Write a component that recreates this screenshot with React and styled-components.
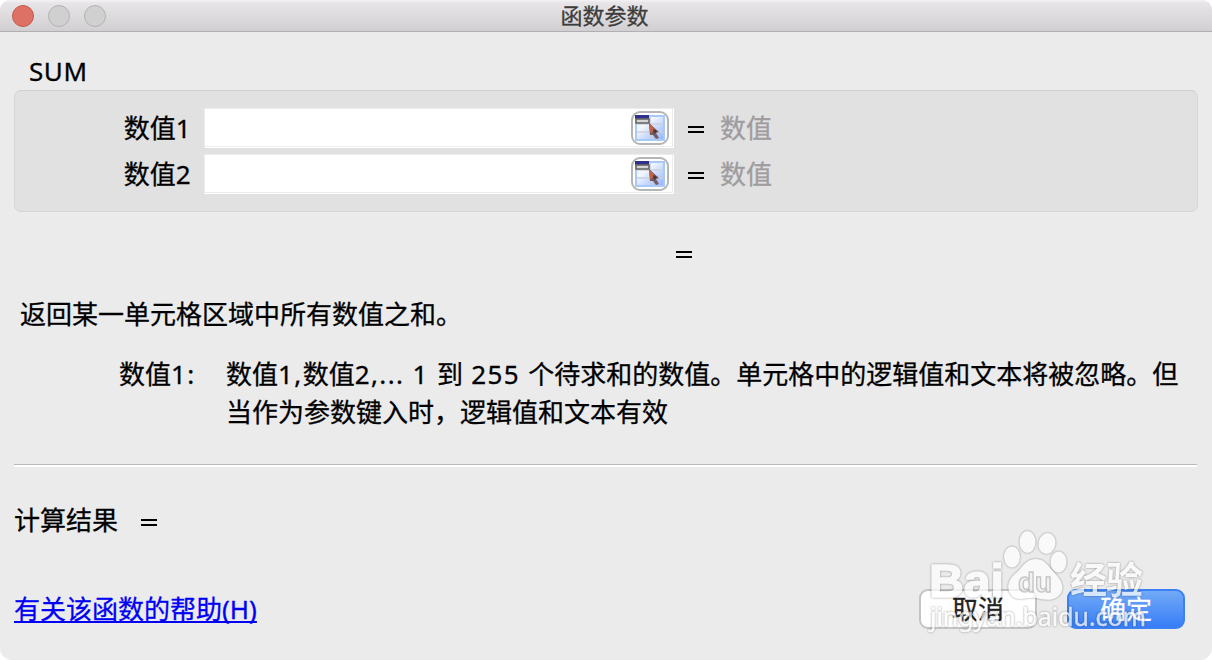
import React from 'react';
import styled, { createGlobalStyle, css } from 'styled-components';

const GlobalStyle = createGlobalStyle`
  * {
    box-sizing: border-box;
  }

  body {
    margin: 0;
    background: #fff;
  }
`;

const Dialog = styled.main`
  position: relative;
  display: flex;
  flex-direction: column;
  width: 1212px;
  height: 660px;
  overflow: hidden;
  border-radius: 10px 10px 12px 12px;
  background: #ebebeb;
  color: #000;
  font-family: 'Noto Sans', 'Noto Sans CJK SC', sans-serif;
  font-size: 26px;
  line-height: 38px;
  white-space: nowrap;
  -webkit-text-stroke: 0.3px currentColor;
`;

const TitleBar = styled.header`
  display: grid;
  grid-template-columns: 1fr auto 1fr;
  align-items: center;
  height: 32px;
  padding: 0 15px 0 12px;
  border-bottom: 1px solid #b1afb1;
  background: linear-gradient(#f4f3f4 0, #e7e5e7 3px, #d1cfd1 100%);
`;

const Lights = styled.div`
  display: flex;
  gap: 14px;
`;

const Light = styled.span`
  width: 22px;
  height: 22px;
  border: 1px solid ${({ $active }) => ($active ? '#c6574c' : '#b3b2b3')};
  border-radius: 50%;
  background: ${({ $active }) => ($active ? '#dd7166' : '#d1d0d1')};
`;

const Title = styled.h1`
  margin: 0;
  color: #3c3c3c;
  font-size: 22px;
  font-weight: 400;
  line-height: 29px;
`;

const Body = styled.div`
  display: flex;
  flex: 1;
  flex-direction: column;
  padding: 20px 14px 0;
`;

const FunctionName = styled.h2`
  height: 38px;
  margin: 0 0 0 15px;
  font-size: 26px;
  font-weight: 400;
  letter-spacing: 0.6px;
`;

const ArgumentsPanel = styled.section`
  display: flex;
  flex-direction: column;
  gap: 6px;
  height: 122px;
  padding: 17px 0 0;
  border: 1px solid #d7d7d7;
  border-top-color: #cfcfcf;
  border-radius: 7px;
  background: #e1e1e1;
`;

const ArgumentRow = styled.div`
  display: grid;
  grid-template-columns: 176px 470px 46px auto;
  column-gap: 13px;
  height: 40px;
  align-items: center;
`;

const ArgumentLabel = styled.label`
  padding-bottom: 1px;
  text-align: right;
`;

const Field = styled.div`
  display: flex;
  align-items: center;
  justify-content: flex-end;
  height: 40px;
  padding: 0 5px 2px 0;
  border: 1px solid #ededed;
  border-width: 1px 0 0 1px;
  background: #fff;
  box-shadow: inset -1px -1px #fff, inset -2px -2px #ececec;
`;

const PickerButton = styled.button`
  display: flex;
  align-items: center;
  justify-content: center;
  width: 38px;
  height: 34px;
  padding: 0;
  border: 2px solid #b5b5b5;
  border-radius: 9px;
  background: #fff;
`;

const Equals = styled.span`
  display: block;
  width: 16px;
  height: 7px;
  border: solid #000;
  border-width: 2px 0;
`;

const RowEquals = styled(Equals)`
  margin: 3px 0 0 1px;
`;

const ValueHint = styled.span`
  margin-left: -26px;
  padding-bottom: 1px;
  color: #9e9c9f;
`;

const ResultRow = styled.div`
  height: 83px;
  padding: 39px 0 0 662px;
`;

const Summary = styled.p`
  margin: 0 0 22px 6px;
`;

const ArgumentHelp = styled.dl`
  display: grid;
  grid-template-columns: 107px auto;
  margin: 0 0 0 105px;

  dt,
  dd {
    margin: 0;
  }
`;

const Latin = styled.span`
  letter-spacing: ${({ $spacing }) => $spacing || '1.4px'};
`;

const Divider = styled.hr`
  width: 1183px;
  height: 3px;
  margin: 33px 0 34px;
  border: 0;
  border-top: 1px solid #b9b9b9;
  background: #fff;
`;

const Outcome = styled.div`
  display: flex;
  align-items: center;
  gap: 23px;

  ${Equals} {
    margin-top: 5px;
  }
`;

const Footer = styled.footer`
  display: flex;
  align-items: center;
  justify-content: space-between;
  height: 40px;
  margin: 50px 13px 0 0;
`;

const HelpLink = styled.a`
  margin-bottom: 1px;
  color: #0000f5;
  text-decoration: underline;
  text-decoration-skip-ink: none;
  text-decoration-thickness: 2px;
  text-underline-offset: 2px;
`;

const Actions = styled.div`
  display: flex;
  gap: 30px;
`;

const Button = styled.button`
  width: 118px;
  height: 40px;
  padding: 0;
  border: 2px solid #c4c4c4;
  border-radius: 9px;
  background: #fff;
  color: #222;
  font: inherit;
  line-height: 34px;

  ${({ $primary }) =>
    $primary &&
    css`
      border-color: #3c80f5;
      background: linear-gradient(#72aaf6, #387df7);
      color: #fff;
    `}
`;

const Watermark = styled.svg`
  position: absolute;
  top: 520px;
  left: 900px;
  opacity: 0.72;
  pointer-events: none;
  -webkit-text-stroke: 0;
  filter: drop-shadow(0 0 1px rgba(0, 0, 0, 0.55));
`;

const PickerIcon = () => (
  <svg width="30" height="26" viewBox="0 0 30 26" aria-hidden="true">
    <defs>
      <linearGradient id="sheet" x1="0" y1="0" x2="1" y2="1">
        <stop offset="0.35" stopColor="#f1f6ff" />
        <stop offset="1" stopColor="#8eb0fb" />
      </linearGradient>
    </defs>
    <rect x="1" y="1" width="28" height="24" fill="url(#sheet)" stroke="#a9c9f6" strokeWidth="2" />
    <path d="M2 9H28M2 17H28M15 2V24" stroke="#cbd1dd" strokeWidth="1.6" />
    <rect width="14" height="4" fill="#302f8b" />
    <rect x="1" y="4" width="13" height="4" fill="#d4d4d4" stroke="#686868" strokeWidth="1.6" />
    <path d="M14 8L24 17L21 18L24 23L21 24L18 20L15 20Z" fill="#755b60" />
    <path d="M14 8L20 14L15.500 19Z" fill="#ba6549" />
    <path d="M18 14L22 16L19 19Z" fill="#493433" />
  </svg>
);

const SiteMark = () => (
  <Watermark width="270" height="120" viewBox="0 0 270 120" aria-hidden="true">
    <g fill="#fff">
      <text
        x="29"
        y="77"
        fontFamily="Liberation Sans, sans-serif"
        fontSize="46"
        fontWeight="700"
        stroke="#fff"
        strokeWidth="1.5"
        textLength="75"
        lengthAdjust="spacingAndGlyphs"
      >
        Bai
      </text>
      <ellipse cx="112" cy="37" rx="8" ry="10.500" />
      <ellipse cx="127.500" cy="22" rx="8" ry="11" />
      <ellipse cx="147" cy="23.500" rx="8.500" ry="10.500" transform="rotate(12 147 23.500)" />
      <ellipse cx="158.500" cy="42" rx="8" ry="10.500" />
      <path d="M135 39C126 39 122 48 116 53C107 60 106 70 112 76C118 82 128 77 136 78C145 80 155 82 161 73C166 63 157 56 151 49C147 44 144 39 135 39Z" />
      <text
        x="170"
        y="74"
        fontFamily="Noto Sans CJK SC, sans-serif"
        fontSize="37"
        fontWeight="700"
        textLength="73"
      >
        经验
      </text>
      <text
        x="30"
        y="106"
        fontFamily="Noto Sans, sans-serif"
        fontSize="25"
        stroke="#fff"
        strokeWidth="0.5"
        textLength="216"
        lengthAdjust="spacingAndGlyphs"
      >
        jingyan.baidu.com
      </text>
    </g>
    <text
      x="118"
      y="72"
      fill="#f4f4f4"
      stroke="#b8b8b8"
      strokeWidth="1.4"
      fontFamily="Liberation Sans, sans-serif"
      fontSize="28"
      fontWeight="700"
      textLength="34"
      lengthAdjust="spacingAndGlyphs"
    >
      du
    </text>
  </Watermark>
);

const argumentNumbers = [1, 2];

const App = () => (
  <>
    <GlobalStyle />
    <Dialog>
      <TitleBar>
        <Lights>
          <Light $active />
          <Light />
          <Light />
        </Lights>
        <Title>函数参数</Title>
      </TitleBar>
      <Body>
        <FunctionName>SUM</FunctionName>
        <ArgumentsPanel>
          {argumentNumbers.map((number) => (
            <ArgumentRow key={number}>
              <ArgumentLabel>
                数值<Latin $spacing="0.4px">{number}</Latin>
              </ArgumentLabel>
              <Field>
                <PickerButton>
                  <PickerIcon />
                </PickerButton>
              </Field>
              <RowEquals />
              <ValueHint>数值</ValueHint>
            </ArgumentRow>
          ))}
        </ArgumentsPanel>
        <ResultRow>
          <Equals />
        </ResultRow>
        <Summary>返回某一单元格区域中所有数值之和。</Summary>
        <ArgumentHelp>
          <dt>
            数值<Latin>1:</Latin>
          </dt>
          <dd>
            数值<Latin>1,</Latin>数值<Latin>2,... 1 </Latin>到<Latin> 255 </Latin>
            个待求和的数值。单元格中的逻辑值和文本将被忽略。但
            <br />
            当作为参数键入时，逻辑值和文本有效
          </dd>
        </ArgumentHelp>
        <Divider />
        <Outcome>
          计算结果
          <Equals />
        </Outcome>
        <Footer>
          <HelpLink>有关该函数的帮助(H)</HelpLink>
          <Actions>
            <Button>取消</Button>
            <Button $primary>确定</Button>
          </Actions>
        </Footer>
      </Body>
      <SiteMark />
    </Dialog>
  </>
);

export default App;
